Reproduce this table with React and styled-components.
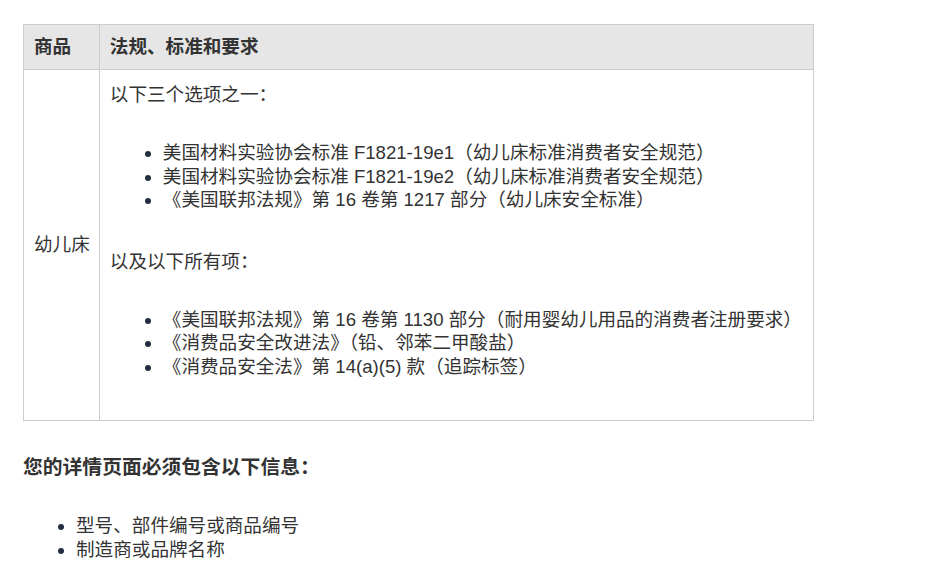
import React from "react";
import styled, { createGlobalStyle } from "styled-components";

const GlobalStyle = createGlobalStyle`
  html, body {
    margin: 0;
    padding: 0;
    background: #ffffff;
  }
  body {
    font-family: "Liberation Sans", Arial, "Noto Sans CJK SC", sans-serif;
    font-size: 18.6px;
    line-height: 23.5px;
    color: #333333;
  }
`;

const Page = styled.div`
  padding: 24px 23px 0;
`;

const Table = styled.table`
  width: 791px;
  border-collapse: collapse;
  font-size: 18.6px;
  line-height: 23.5px;
`;

const HeadCell = styled.th`
  background: #e6e6e6;
  border: 1px solid #cccccc;
  text-align: left;
  font-weight: 700;
  height: 44px;
  padding: ${(p) => (p.$narrow ? "0 9px 0 10px" : "0 10px")};
  white-space: nowrap;
  width: ${(p) => (p.$narrow ? "55px" : "auto")};
`;

const Cell = styled.td`
  border: 1px solid #cccccc;
  vertical-align: ${(p) => (p.$middle ? "middle" : "top")};
  white-space: ${(p) => (p.$middle ? "nowrap" : "normal")};
  padding: ${(p) => (p.$middle ? "0 9px 0 10px" : "13px 10px 4px")};
`;

const Para = styled.p`
  margin: 0;
`;

const List = styled.ul`
  margin: 34.5px 0 38px;
  padding-left: 53px;

  li::marker {
    color: #232f3e;
  }
`;

const Heading = styled.p`
  margin: 35px 0 0;
  font-weight: 700;
  font-size: 19.8px;
`;

const first = [
  "美国材料实验协会标准 F1821-19e1（幼儿床标准消费者安全规范）",
  "美国材料实验协会标准 F1821-19e2（幼儿床标准消费者安全规范）",
  "《美国联邦法规》第 16 卷第 1217 部分（幼儿床安全标准）",
];

const second = [
  "《美国联邦法规》第 16 卷第 1130 部分（耐用婴幼儿用品的消费者注册要求）",
  "《消费品安全改进法》（铅、邻苯二甲酸盐）",
  "《消费品安全法》第 14(a)(5) 款（追踪标签）",
];

const details = ["型号、部件编号或商品编号", "制造商或品牌名称"];

export default function App() {
  return (
    <Page>
      <GlobalStyle />
      <Table>
        <thead>
          <tr>
            <HeadCell $narrow>商品</HeadCell>
            <HeadCell>法规、标准和要求</HeadCell>
          </tr>
        </thead>
        <tbody>
          <tr>
            <Cell $middle>幼儿床</Cell>
            <Cell>
              <Para>以下三个选项之一：</Para>
              <List>
                {first.map((t) => (
                  <li key={t}>{t}</li>
                ))}
              </List>
              <Para>以及以下所有项：</Para>
              <List>
                {second.map((t) => (
                  <li key={t}>{t}</li>
                ))}
              </List>
            </Cell>
          </tr>
        </tbody>
      </Table>
      <Heading>您的详情页面必须包含以下信息：</Heading>
      <List>
        {details.map((t) => (
          <li key={t}>{t}</li>
        ))}
      </List>
    </Page>
  );
}
